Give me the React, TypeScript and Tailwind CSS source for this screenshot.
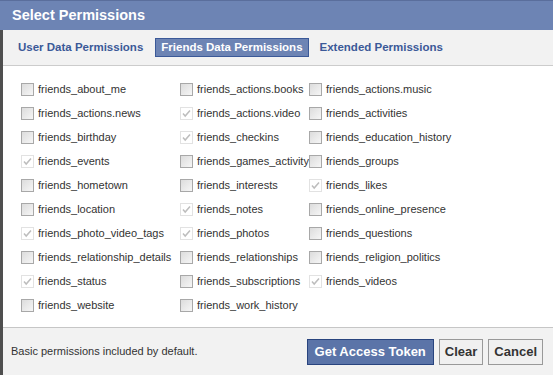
import React from "react";

const cols: [string, boolean][][] = [
  [
    ["friends_about_me", false],
    ["friends_actions.news", false],
    ["friends_birthday", false],
    ["friends_events", true],
    ["friends_hometown", false],
    ["friends_location", false],
    ["friends_photo_video_tags", true],
    ["friends_relationship_details", false],
    ["friends_status", true],
    ["friends_website", false],
  ],
  [
    ["friends_actions.books", false],
    ["friends_actions.video", true],
    ["friends_checkins", true],
    ["friends_games_activity", false],
    ["friends_interests", false],
    ["friends_notes", true],
    ["friends_photos", true],
    ["friends_relationships", false],
    ["friends_subscriptions", false],
    ["friends_work_history", false],
  ],
  [
    ["friends_actions.music", false],
    ["friends_activities", false],
    ["friends_education_history", false],
    ["friends_groups", false],
    ["friends_likes", true],
    ["friends_online_presence", false],
    ["friends_questions", false],
    ["friends_religion_politics", false],
    ["friends_videos", true],
  ],
];

const Box = ({ checked }: { checked: boolean }) =>
  checked ? (
    <span className="w-[13px] h-[13px] shrink-0 flex items-center justify-center border border-[#e2e2e2] bg-white">
      <svg width="11" height="11" viewBox="0 0 11 11">
        <path d="M2 5.5 L4.2 8 L9 2.5" fill="none" stroke="#bdbdbd" strokeWidth="1.5" />
      </svg>
    </span>
  ) : (
    <span className="w-[13px] h-[13px] shrink-0 border border-[#a8a8a8] bg-gradient-to-br from-[#dcdcdc] to-[#f6f6f6]" />
  );

const App = () => {
  const rows = Array.from({ length: 10 }, (_, r) => cols.map((c) => c[r]));
  return (
    <div className="w-[553px] h-[375px] flex flex-col bg-white overflow-hidden font-['Liberation_Sans',Tahoma,sans-serif]">
      <div className="h-[30px] shrink-0 bg-[#6d84b4] border-t border-[#5a6e9c] flex items-center px-3">
        <span className="text-white font-bold text-[14.5px]">Select Permissions</span>
      </div>
      <div className="flex-1 flex flex-col border-l-[3px] border-[#4f4f4f]">
        <div className="h-[36px] shrink-0 bg-[#f2f2f2] border-b border-[#cccccc] flex items-center pl-[14px] gap-[11px] text-[11.5px] font-bold text-[#3b5998]">
          <span className="px-[1px]">User Data Permissions</span>
          <span className="bg-[#6d84b4] text-white border border-[#3b5998] px-[5px] h-[19px] flex items-center">
            Friends Data Permissions
          </span>
          <span>Extended Permissions</span>
        </div>
        <div className="h-[261px] shrink-0 bg-white pt-[11px] pl-[18px]">
          {rows.map((row, r) => (
            <div key={r} className="grid grid-cols-[159px_129px_1fr] h-[24px] items-center">
              {row.map((item, i) =>
                item ? (
                  <div key={i} className="flex items-center gap-[4px] text-[11px] text-[#333] whitespace-nowrap">
                    <Box checked={item[1]} />
                    <span>{item[0]}</span>
                  </div>
                ) : (
                  <div key={i} />
                )
              )}
            </div>
          ))}
        </div>
        <div className="flex-1 bg-[#f2f2f2] border-t border-[#c6c6c6] flex items-center justify-between pl-[8px] pr-[10px]">
          <span className="text-[11px] text-[#333]">Basic permissions included by default.</span>
          <div className="flex gap-[5px]">
            <button className="h-[26px] px-[7px] bg-[#5b74a8] border border-[#29447e] text-white font-bold text-[13px]">
              Get Access Token
            </button>
            <button className="h-[26px] px-[5px] bg-[#f0f0f0] border border-[#999] text-[#333] font-bold text-[13px]">
              Clear
            </button>
            <button className="h-[26px] px-[5px] bg-[#f0f0f0] border border-[#999] text-[#333] font-bold text-[13px]">
              Cancel
            </button>
          </div>
        </div>
      </div>
    </div>
  );
};

export default App;
